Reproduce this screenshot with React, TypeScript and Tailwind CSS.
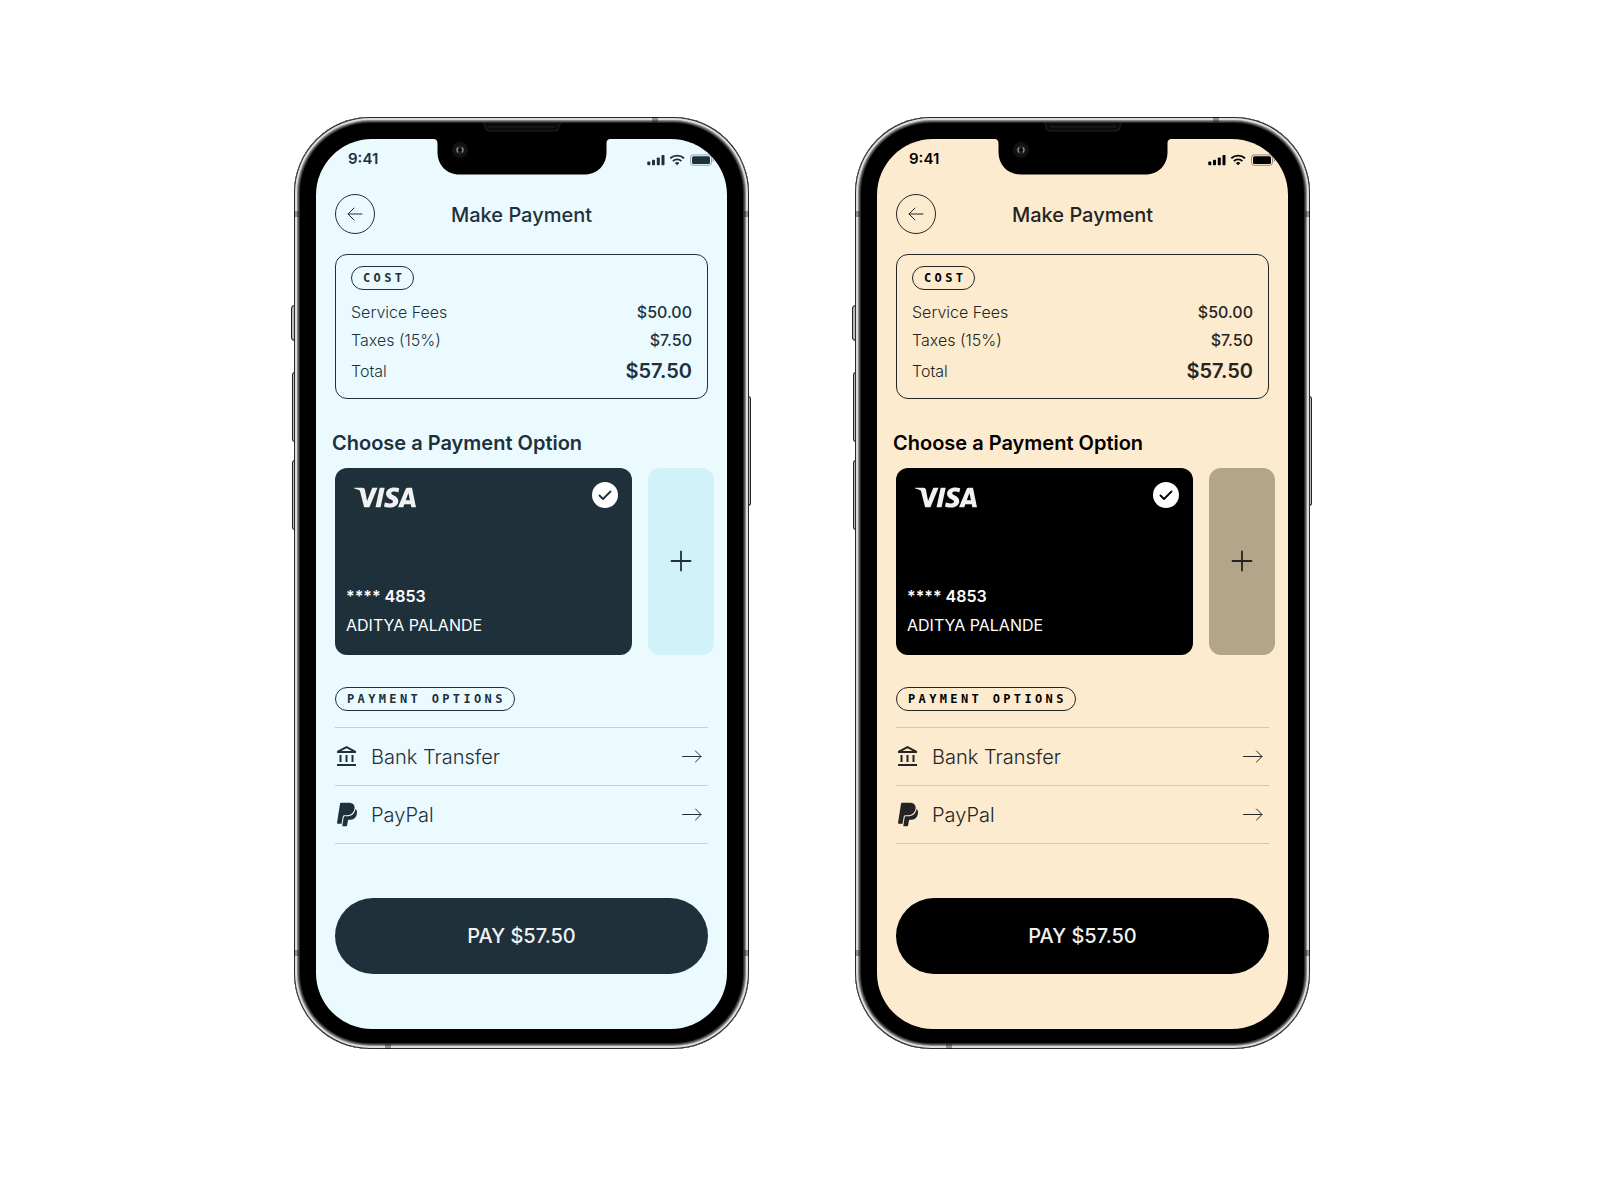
import React from "react";
import { FaPaypal } from "react-icons/fa6";
import { MdOutlineAccountBalance } from "react-icons/md";
import { SiVisa } from "react-icons/si";

type Theme = {
  id: string;
  screen: string;
  text: string;
  strong: string;
  status: string;
  border: string;
  line: string;
  solid: string;
  add: string;
};

const themes: Theme[] = [
  {
    id: "ice",
    screen: "bg-[#eafaff]",
    text: "text-[#1e313b]",
    strong: "text-[#1e313b]",
    status: "text-[#1e313b]",
    border: "border-[#1e313b]",
    line: "border-[#c1d1d8]",
    solid: "bg-[#1e313b]",
    add: "bg-[#d1f2f9]",
  },
  {
    id: "sand",
    screen: "bg-[#fcebcf]",
    text: "text-[#242424]",
    strong: "text-black",
    status: "text-black",
    border: "border-[#242424]",
    line: "border-[#d3c7b3]",
    solid: "bg-black",
    add: "bg-[#b2a58a]",
  },
];

const fees = [
  { label: "Service Fees", value: "$50.00", row: "h-7", amount: "text-base font-medium" },
  { label: "Taxes (15%)", value: "$7.50", row: "h-7", amount: "text-base font-medium" },
  { label: "Total", value: "$57.50", row: "h-[34px]", amount: "text-xl font-semibold" },
];

function ArrowLeft() {
  return (
    <svg width="16" height="14" viewBox="0 0 16 14" fill="none" stroke="currentColor" strokeWidth="1" strokeLinecap="round" strokeLinejoin="round" aria-hidden="true">
      <path d="M15 7H1M7 1 1 7l6 6" />
    </svg>
  );
}

function ArrowRight() {
  return (
    <svg width="20" height="14" viewBox="0 0 20 14" fill="none" stroke="currentColor" strokeWidth="1" strokeLinecap="round" strokeLinejoin="round" aria-hidden="true">
      <path d="M.5 6.500H19M13.500 1 19 6.500 13.500 12" />
    </svg>
  );
}

function StatusIcons() {
  return (
    <svg width="68" height="12" viewBox="0 0 68 12" fill="currentColor" aria-hidden="true">
      <rect x="0.300" y="7.500" width="3" height="3.800" rx="0.800" />
      <rect x="5" y="5.700" width="3" height="5.600" rx="0.800" />
      <rect x="9.800" y="3.500" width="3" height="7.800" rx="0.800" />
      <rect x="14.500" y="1" width="3" height="10.300" rx="0.800" />
      <g fill="none" stroke="currentColor" strokeWidth="1.900">
        <path d="M23.300 4.300a10 10 0 0 1 13.700 0" />
        <path d="M25.900 7.100a6.200 6.200 0 0 1 8.500 0" />
      </g>
      <path d="M30.150 11.300 27.900 9.100a3.300 3.300 0 0 1 4.500 0z" />
      <rect x="43.500" y="0.900" width="21" height="10.400" rx="2.800" fill="none" stroke="currentColor" strokeOpacity="0.4" />
      <rect x="45" y="2.300" width="18" height="7.600" rx="1.500" />
      <path d="M65.700 4.400v3.600c.8-.3 1.300-1 1.300-1.800s-.5-1.500-1.300-1.800z" opacity="0.4" />
    </svg>
  );
}

function Notch() {
  return (
    <svg className="absolute left-1/2 -top-4 -translate-x-1/2" width="178" height="52" viewBox="0 0 178 52" aria-hidden="true">
      <path d="M0 16c3.500 0 4.500 1.500 4.500 5v8c0 13 9 22.500 22 22.500h125c13 0 22-9.500 22-22.500v-8c0-3.500 1-5 4.500-5z" fill="#000" />
      <path d="M50 0q2 1 2 4 0 4 4 4h66q4 0 4-4 0-3 2-4" fill="#0b0b0b" stroke="#222" strokeWidth="1" />
      <path d="M56 4h66" stroke="#161616" strokeWidth="2" />
      <circle cx="27" cy="27" r="8" fill="#121212" />
      <circle cx="27" cy="27" r="4.500" fill="#222" />
      <path d="M25 24.500q-2 2.500 0 5M29 24.500q2 2.500 0 5" fill="none" stroke="#888" strokeWidth="1.300" />
      <circle cx="27" cy="27" r="1.500" fill="#000" />
    </svg>
  );
}

function SideButtons() {
  const key = "absolute border border-[#222] bg-[#bbb]";
  return (
    <div aria-hidden="true">
      <span className={`${key} -left-[3px] top-[188px] h-9 w-1 rounded-l-sm`} />
      <span className={`${key} -left-0.5 top-[255px] h-[70px] w-[3px] rounded-l-sm`} />
      <span className={`${key} -left-0.5 top-[343px] h-[70px] w-[3px] rounded-l-sm`} />
      <span className={`${key} -right-0.5 top-[279px] h-[110px] w-[3px] rounded-r-sm`} />
    </div>
  );
}

function AntennaBands() {
  const band = "absolute bg-black/35";
  return (
    <div aria-hidden="true">
      <span className={`${band} left-0 top-[94px] h-1.5 w-[5px]`} />
      <span className={`${band} right-0 top-[94px] h-1.5 w-[5px]`} />
      <span className={`${band} bottom-[93px] left-0 h-1.5 w-[5px]`} />
      <span className={`${band} bottom-[93px] right-0 h-1.5 w-[5px]`} />
      <span className={`${band} right-[91px] top-0 h-[5px] w-1.5`} />
      <span className={`${band} bottom-0 left-[91px] h-[5px] w-1.5`} />
    </div>
  );
}

function Pill({ theme, children }: { theme: Theme; children: string }) {
  return (
    <h3
      className={`flex h-6 w-fit items-center rounded-full border pl-[11px] pr-2 font-['DejaVu_Sans_Mono',monospace] text-xs font-bold tracking-[0.28em] ${theme.border} ${theme.strong}`}
    >
      {children}
    </h3>
  );
}

function Phone({ theme }: { theme: Theme }) {
  return (
    <section className="relative w-full max-w-[455px]">
      <SideButtons />
      <div className="relative rounded-[76px] bg-black px-[22px] pb-5 pt-[22px] shadow-[inset_0_0_0_1px_#2a2a2a,inset_0_0_0_3px_#dcdcdc,inset_0_0_0_4px_#8a8a8a,inset_0_0_0_5px_#555,inset_0_0_0_6px_#2a2a2a]">
        <AntennaBands />
        <div className={`relative rounded-[56px] pb-[55px] pl-[19px] ${theme.screen} ${theme.text}`}>
          <Notch />
          <div className={`flex h-[39px] items-center justify-between pl-[13px] pr-3 pt-0.5 ${theme.status}`}>
            <span className="text-[15px] font-semibold">9:41</span>
            <StatusIcons />
          </div>

          <div className="pr-[19px]">
            <header className="mt-4 grid grid-cols-[40px_1fr_40px] items-center">
              <button type="button" aria-label="Back" className={`flex size-10 items-center justify-center rounded-full border ${theme.border}`}>
                <ArrowLeft />
              </button>
              <h1 className="pt-0.5 text-center text-xl font-medium">Make Payment</h1>
            </header>

            <div className={`mt-5 rounded-xl border px-[15px] pb-2.5 pt-[11px] ${theme.border}`}>
              <Pill theme={theme}>COST</Pill>
              <dl className="mt-2">
                {fees.map((fee) => (
                  <div key={fee.label} className={`flex items-center justify-between ${fee.row}`}>
                    <dt className="text-base font-light">{fee.label}</dt>
                    <dd className={fee.amount}>{fee.value}</dd>
                  </div>
                ))}
              </dl>
            </div>
          </div>

          <h2 className={`-ml-[3px] mt-[30px] text-xl font-semibold ${theme.strong}`}>Choose a Payment Option</h2>

          <div className="mt-[11px] flex gap-4 pr-[13px]">
            <label className={`flex h-[187px] flex-1 cursor-pointer flex-col justify-between rounded-xl pb-[18px] pl-[11px] pr-3.5 pt-3.5 text-white ${theme.solid}`}>
              <input type="radio" name={`card-${theme.id}`} defaultChecked className="sr-only" />
              <span className="flex items-start justify-between">
                <SiVisa viewBox="0 8 24 8" className="ml-2 mt-[5px] h-[21px] w-[62px] text-[#f1f1f1]" aria-label="Visa" />
                <span className={`flex size-[26px] items-center justify-center rounded-full bg-white ${theme.strong}`}>
                  <svg width="14" height="10" viewBox="0 0 14 10" fill="none" stroke="currentColor" strokeWidth="1.800" strokeLinecap="round" strokeLinejoin="round" aria-hidden="true">
                    <path d="M1.500 5.500 5 9l7.500-7.500" />
                  </svg>
                </span>
              </span>
              <span className="flex flex-col gap-[5px]">
                <span className="text-base font-semibold">**** 4853</span>
                <span className="text-base font-normal">ADITYA PALANDE</span>
              </span>
            </label>
            <button type="button" aria-label="Add card" className={`flex w-[66px] items-center justify-center rounded-xl pb-px ${theme.add}`}>
              <svg width="22" height="22" viewBox="0 0 22 22" stroke="currentColor" strokeWidth="1.800" strokeLinecap="round" aria-hidden="true">
                <path d="M11 1.500v19M1.500 11h19" />
              </svg>
            </button>
          </div>

          <div className="pr-[19px]">
            <div className="mt-8">
              <Pill theme={theme}>PAYMENT OPTIONS</Pill>
            </div>
            <ul className={`mt-4 border-t ${theme.line}`}>
              <li className={`border-b ${theme.line}`}>
                <button type="button" className="flex h-[57px] w-full items-center pr-1.5 text-xl font-light">
                  <MdOutlineAccountBalance className="mr-3 size-6" aria-hidden="true" />
                  Bank Transfer
                  <span className="ml-auto">
                    <ArrowRight />
                  </span>
                </button>
              </li>
              <li className={`border-b ${theme.line}`}>
                <button type="button" className="flex h-[57px] w-full items-center pr-1.5 text-xl font-light">
                  <FaPaypal className="ml-0.5 mr-3.5 h-[27px] w-5" aria-hidden="true" />
                  PayPal
                  <span className="ml-auto">
                    <ArrowRight />
                  </span>
                </button>
              </li>
            </ul>
            <button type="button" className={`mt-[54px] h-[76px] w-full rounded-full text-xl font-medium text-[#f1f1f1] ${theme.solid}`}>
              PAY $57.50
            </button>
          </div>
        </div>
      </div>
    </section>
  );
}

export default function App() {
  return (
    <main className="flex min-h-screen flex-wrap items-center justify-center gap-x-[106px] gap-y-16 bg-white pb-[34px] pl-1 font-[Inter,sans-serif]">
      {themes.map((theme) => (
        <Phone key={theme.id} theme={theme} />
      ))}
    </main>
  );
}
